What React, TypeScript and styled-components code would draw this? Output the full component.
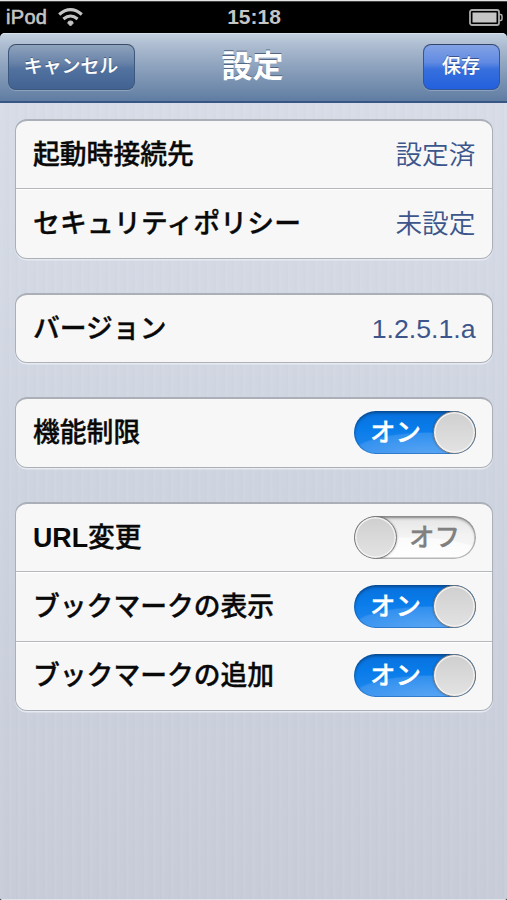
import React, { useState } from "react";
import styled, { createGlobalStyle } from "styled-components";

const GlobalStyle = createGlobalStyle`
  *, *::before, *::after { box-sizing: border-box; }
  body {
    margin: 0;
    overflow: hidden;
    background: #000;
    font-family: "Liberation Sans", "Noto Sans CJK JP", sans-serif;
  }
  button { font-family: inherit; border: 0; padding: 0; margin: 0; }
`;

const Screen = styled.div`
  width: 507px;
  height: 900px;
  display: flex;
  flex-direction: column;
  background: #000;
  border-top: 1px solid #e4e4e4;
`;

const StatusBar = styled.header`
  height: 32px;
  flex: none;
  display: grid;
  grid-template-columns: 1fr auto 1fr;
  align-items: center;
  padding: 0 4px 2px 6px;
  color: #c5c5c5;
  font-size: 20px;
  line-height: 30px;
  border-top: 1px solid #444;
`;

const Carrier = styled.div`
  display: flex;
  align-items: center;
  gap: 11px;
  letter-spacing: 0.3px;
  -webkit-text-stroke: 0.6px #c5c5c5;
`;

const Clock = styled.div`
  font-weight: 700;
  font-size: 21px;
  padding-right: 1px;
`;

const BatterySlot = styled.div`
  display: flex;
  justify-content: flex-end;
`;

const NavBar = styled.nav`
  height: 70px;
  flex: none;
  display: grid;
  grid-template-columns: 1fr auto 1fr;
  align-items: start;
  padding: 11px 7px 0 8px;
  border-radius: 5px 5px 0 0;
  border-bottom: 2px solid #375686;
  background: linear-gradient(#c4d1e0 0%, #aebdd1 17%, #8da2bd 50%, #6d88aa 85%, #5f7ca1 100%);
  box-shadow: inset 0 1px 0 #d6e0ec;
`;

const Title = styled.h1`
  margin: 0;
  padding-right: 3px;
  font-size: 31px;
  line-height: 46px;
  font-weight: 700;
  color: #fff;
  text-shadow: 0 -1.5px 0 #526783;
`;

const NavButton = styled.button<{ $primary?: boolean }>`
  width: ${(p) => (p.$primary ? 77 : 127)}px;
  height: 46px;
  justify-self: ${(p) => (p.$primary ? "end" : "start")};
  border: 1.5px solid ${(p) => (p.$primary ? "#31569d" : "#3d587f")};
  border-top-color: ${(p) => (p.$primary ? "#34456c" : "#3a4c66")};
  border-radius: 8px;
  background: ${(p) =>
    p.$primary
      ? "linear-gradient(#83a2e4 0%, #608ae2 40%, #376fdd 55%, #2360dc 100%)"
      : "linear-gradient(#8ea3bd 0%, #6983a8 40%, #51719f 55%, #426392 100%)"};
  box-shadow: 0 1px 0 rgba(255, 255, 255, 0.22);
  color: #fff;
  font-size: 18.9px;
  line-height: 43px;
  padding: 0 1px 2px 0;
  font-weight: 500;
  -webkit-text-stroke: 0.15px #fff;
  text-shadow: 0 -1px 0 rgba(30, 50, 90, 0.65);
`;

const Content = styled.main`
  flex: 1;
  display: flex;
  flex-direction: column;
  gap: 34px;
  padding: 16px 14.5px 0 15px;
  border-bottom: 1px solid #dfe3ea;
  border-radius: 0 0 2px 2px;
  background:
    repeating-linear-gradient(90deg, rgba(255, 255, 255, 0.035) 0 2px, transparent 4px 6px, rgba(80, 95, 140, 0.01) 7px 9px),
    linear-gradient(#d7dce7 0%, #cfd5e0 45%, #c7ccd8 100%);
`;

const Group = styled.section`
  flex: none;
  border: 2px solid #abafb8;
  border-width: 2px 1px 1px;
  border-radius: 12px;
  background: #f7f7f7;
  box-shadow: 0 1.5px 0 #e7eaf0;
`;

const Row = styled.div`
  height: 70px;
  display: flex;
  align-items: center;
  justify-content: space-between;
  padding: 0 16px 0 17px;

  &:first-child { height: 67.3px; }
  & + & { height: 69.7px; border-top: 1px solid #b5b7ba; box-shadow: inset 0 1px 0 #fff; }
`;

const Label = styled.span<{ $spacing?: number }>`
  padding-top: 1px;
  font-size: 26.8px;
  line-height: 40px;
  font-weight: 500;
  letter-spacing: ${(p) => p.$spacing ?? 0}px;
  -webkit-text-stroke: 0.35px #090909;
  color: #090909;
`;

const Latin = styled.b`
  font-weight: 700;
  -webkit-text-stroke: 0;
`;

const Value = styled.span`
  font-size: 26.7px;
  line-height: 40px;
  font-weight: 350;
  color: #3c568c;
`;

const Track = styled.button<{ $on: boolean }>`
  width: 122px;
  height: 43px;
  display: flex;
  flex-direction: ${(p) => (p.$on ? "row" : "row-reverse")};
  align-items: center;
  overflow: hidden;
  border-radius: 22px;
  color: ${(p) => (p.$on ? "#fff" : "#808080")};
  background: ${(p) =>
    p.$on
      ? "radial-gradient(ellipse 80px 22px at 76px 43px, rgba(123, 184, 247, 0.6) 0%, rgba(96, 169, 245, 0.4) 94%, transparent 100%), linear-gradient(#0870dc 0%, #087cea 40%, #2588ed 100%)"
      : "radial-gradient(ellipse 80px 22px at 56px 43px, #fff 0%, #fbfbfb 96%, transparent 100%), linear-gradient(#e4e4e4 0%, #f3f3f3 45%, #f7f7f7 100%)"};
  box-shadow: ${(p) =>
    p.$on
      ? "inset 0 2px 3px #08498f, inset 0 0 0 1px rgba(28, 101, 179, 0.55)"
      : "inset 0 2px 3px #888, inset 0 0 0 1.5px #b8b8b8"};
`;

const TrackText = styled.span<{ $on: boolean }>`
  flex: 1;
  font-size: 25.5px;
  line-height: 40px;
  font-weight: 500;
  -webkit-text-stroke: 0.3px currentColor;
  text-align: center;
  padding: ${(p) => (p.$on ? "0 0 1px 5px" : "0 0 1px 0")};
  margin-right: ${(p) => (p.$on ? 0 : 3)}px;
`;

const Knob = styled.span`
  width: 43px;
  height: 43px;
  flex: none;
  border: 1.5px solid #777;
  border-radius: 50%;
  background: linear-gradient(#cfcfcf, #e3e3e3);
  box-shadow: inset 0 0 0 1.5px #f2f2f2, 0 0 2px rgba(0, 0, 0, 0.35);
`;

const WifiIcon = () => (
  <svg width="25" height="19" viewBox="0 0 25 19" fill="none" stroke="#c5c5c5">
    <path d="M1.2 6.4Q12.5-3 23.8 6.4" strokeWidth="3.2" />
    <path d="M5.4 11Q12.5 5 19.6 11" strokeWidth="3.1" />
    <path d="M12.5 18 9.8 15.2Q9.8 12.9 12.5 12.9T15.2 15.2Z" fill="#c5c5c5" />
  </svg>
);

const BatteryIcon = () => (
  <svg width="34" height="17" viewBox="0 0 34 17">
    <rect x="1" y="1" width="29" height="15" rx="2" fill="none" stroke="#aaa" strokeWidth="1.8" />
    <rect x="3.5" y="3.5" width="24" height="10" fill="#c5c5c5" />
    <path d="M30.5 5.5H31.5Q33 5.5 33 7V10Q33 11.5 31.5 11.5H30.5" fill="none" stroke="#b0b0b0" strokeWidth="1.5" />
  </svg>
);

function Toggle({ initial, label }: { initial: boolean; label: string }) {
  const [on, setOn] = useState(initial);
  return (
    <Track $on={on} role="switch" aria-checked={on} aria-label={label} onClick={() => setOn(!on)}>
      <TrackText $on={on}>{on ? "オン" : "オフ"}</TrackText>
      <Knob />
    </Track>
  );
}

type Setting = { latin?: string; label: string; value?: string; on?: boolean; spacing?: number };

const groups: Setting[][] = [
  [
    { label: "起動時接続先", value: "設定済" },
    { label: "セキュリティポリシー", value: "未設定", spacing: 0.2 },
  ],
  [{ label: "バージョン", value: "1.2.5.1.a" }],
  [{ label: "機能制限", on: true }],
  [
    { latin: "URL", label: "変更", on: false },
    { label: "ブックマークの表示", on: true },
    { label: "ブックマークの追加", on: true },
  ],
];

export default function App() {
  return (
    <>
      <GlobalStyle />
      <Screen lang="ja">
        <StatusBar>
          <Carrier>iPod<WifiIcon /></Carrier>
          <Clock>15:18</Clock>
          <BatterySlot><BatteryIcon /></BatterySlot>
        </StatusBar>
        <NavBar>
          <NavButton>キャンセル</NavButton>
          <Title>設定</Title>
          <NavButton $primary>保存</NavButton>
        </NavBar>
        <Content>
          {groups.map((rows) => (
            <Group key={rows[0].label}>
              {rows.map((row) => (
                <Row key={row.label}>
                  <Label $spacing={row.spacing}>{row.latin && <Latin>{row.latin}</Latin>}{row.label}</Label>
                  {row.value ? <Value>{row.value}</Value> : <Toggle initial={!!row.on} label={(row.latin ?? "") + row.label} />}
                </Row>
              ))}
            </Group>
          ))}
        </Content>
      </Screen>
    </>
  );
}
